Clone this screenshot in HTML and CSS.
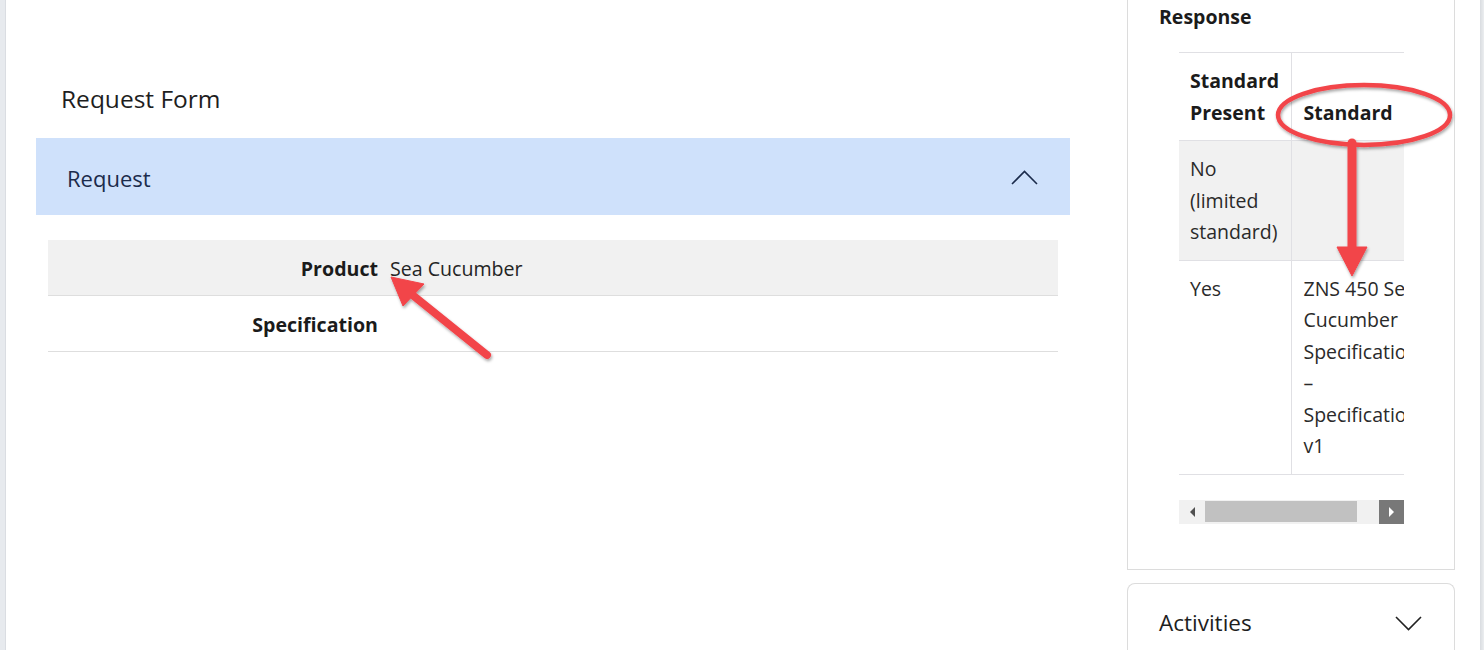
FILE: index.html
```html
<!DOCTYPE html>
<html lang="en">
<head>
<meta charset="utf-8">
<title>Request Form</title>
<link rel="stylesheet" href="styles.css">
</head>
<body>
<div class="app">
  <div class="gutter-left"></div>
  <main class="main">
    <h1 class="form-title">Request Form</h1>
    <section class="section">
      <header class="section-head">
        <span class="section-name">Request</span>
        <svg class="chev" width="27" height="15" viewBox="0 0 27 15"><path d="M1 14 L13.5 1.5 L26 14" fill="none" stroke="#1b2b4b" stroke-width="1.6"/></svg>
      </header>
      <div class="fields">
        <div class="field alt">
          <div class="label">Product</div>
          <div class="value">Sea Cucumber</div>
        </div>
        <div class="field">
          <div class="label">Specification</div>
          <div class="value"></div>
        </div>
      </div>
    </section>
  </main>
  <aside class="side">
    <div class="card response">
      <h2 class="card-title">Response</h2>
      <div class="table-wrap">
        <div class="table-clip">
          <table class="grid">
            <colgroup><col class="w1"><col class="w2"></colgroup>
            <thead>
              <tr><th class="c1">Standard Present</th><th class="c2">Standard</th></tr>
            </thead>
            <tbody>
              <tr class="alt"><td class="c1">No (limited standard)</td><td class="c2"></td></tr>
              <tr><td class="c1">Yes</td><td class="c2">ZNS 450 Sea Cucumber Specification – Specification v1</td></tr>
            </tbody>
          </table>
        </div>
        <div class="hscroll">
          <div class="hs-btn left"><span class="tri-left"></span></div>
          <div class="hs-track"><div class="hs-thumb"></div></div>
          <div class="hs-btn right"><span class="tri-right"></span></div>
        </div>
      </div>
    </div>
    <div class="card activities">
      <span class="act-title">Activities</span>
      <svg class="chev" width="27" height="15" viewBox="0 0 27 15"><path d="M1 1 L13.5 13.5 L26 1" fill="none" stroke="#222" stroke-width="1.6"/></svg>
    </div>
  </aside>
  <div class="gutter-right"></div>
</div>
<svg class="annotations" width="1484" height="650" viewBox="0 0 1484 650">
  <defs>
    <filter id="sh" x="-20%" y="-20%" width="140%" height="140%">
      <feDropShadow dx="1" dy="2" stdDeviation="1.5" flood-color="#000" flood-opacity="0.35"/>
    </filter>
  </defs>
  <g filter="url(#sh)" fill="#f2444a" stroke="#f2444a">
    <line x1="487" y1="355" x2="410" y2="293" stroke-width="8" stroke-linecap="round"/>
    <polygon points="391,277 403,306 424,284" stroke-width="1" stroke-linejoin="round"/>
    <ellipse cx="1364" cy="115" rx="86" ry="30" fill="none" stroke-width="4.5"/>
    <line x1="1352" y1="143" x2="1352" y2="250" stroke-width="9" stroke-linecap="round"/>
    <polygon points="1337,247 1367,247 1352,276" stroke-width="1" stroke-linejoin="round"/>
  </g>
</svg>
</body>
</html>
```
FILE: styles.css
```css
* { box-sizing: border-box; }
html, body { margin: 0; padding: 0; }
body {
  font-family: "Open Sans", "Noto Sans", "Liberation Sans", sans-serif;
  color: #242424;
  background: #fff;
  width: 1484px;
  height: 650px;
  overflow: hidden;
  position: relative;
}
.app {
  display: flex;
  height: 650px;
}
.gutter-left {
  width: 6px;
  flex: none;
  background: #e7eaee;
  border-right: 1px solid #dadde2;
}
.gutter-right {
  width: 4px;
  flex: none;
  background: linear-gradient(to right, #d9dce0, #eceef0);
}
.main {
  width: 1121px;
  flex: none;
  padding: 82px 57px 0 30px;
}
.form-title {
  margin: 0 0 23px 25px;
  font-size: 24.5px;
  font-weight: 400;
  line-height: 33px;
  color: #1e1e1e;
}
.section-head {
  height: 77px;
  background: #cfe1fb;
  display: flex;
  align-items: center;
  justify-content: space-between;
  padding: 2px 32px 0 31px;
}
.section-name {
  font-size: 22px;
  color: #1b2b4b;
}
.fields {
  margin: 25px 12px 0;
}
.field {
  display: flex;
  align-items: center;
  height: 56px;
  padding-top: 2px;
  border-bottom: 1px solid #dedede;
  font-size: 19.6px;
}
.field.alt { background: #f1f1f1; }
.label {
  width: 330px;
  text-align: right;
  font-weight: 700;
  color: #1b1b1b;
}
.value {
  padding-left: 12px;
  color: #242424;
}
.side {
  width: 328px;
  flex: none;
  margin-right: 25px;
  display: flex;
  flex-direction: column;
  gap: 13px;
}
.card {
  border: 1px solid #dcdcdc;
  background: #fff;
}
.response {
  border-top: none;
  padding: 4px 0 45px 31px;
}
.card-title {
  margin: 0;
  font-size: 19.5px;
  font-weight: 700;
  line-height: 26px;
  color: #1b1b1b;
}
.table-wrap {
  margin: 22px 50px 0 20px;
}
.table-clip {
  overflow: hidden;
  width: 225px;
}
.grid {
  border-collapse: collapse;
  table-layout: fixed;
  width: 277px;
  font-size: 19.5px;
  line-height: 31.5px;
  border-top: 1px solid #e0e0e4;
}
.grid .w1 { width: 112px; }
.grid .w2 { width: 165px; }
.grid th, .grid td {
  text-align: left;
  vertical-align: top;
  padding: 12px 10px 12px 11px;
  border-bottom: 1px solid #e0e0e4;
}
.grid th { font-weight: 700; color: #1b1b1b; vertical-align: bottom; }
.grid td { font-weight: 400; color: #2a2a2a; }
.grid .c1 { border-right: 1px solid #e0e0e4; }
.grid .c2 { padding-left: 12px; padding-right: 35px; }
.grid tr.alt td { background: #f1f1f1; }
.hscroll {
  margin-top: 25px;
  height: 24px;
  width: 225px;
  display: flex;
  background: #f1f1f1;
}
.hs-btn {
  width: 26px;
  flex: none;
  display: flex;
  align-items: center;
  justify-content: center;
}
.hs-btn.right { background: #787878; width: 25px; }
.tri-left {
  width: 0; height: 0;
  border-top: 5px solid transparent;
  border-bottom: 5px solid transparent;
  border-right: 5px solid #505050;
}
.tri-right {
  width: 0; height: 0;
  border-top: 5px solid transparent;
  border-bottom: 5px solid transparent;
  border-left: 5px solid #fff;
}
.hs-track {
  flex: 1;
  display: flex;
  align-items: center;
}
.hs-thumb {
  width: 152px;
  height: 21px;
  background: #c1c1c1;
}
.activities {
  border-radius: 8px 8px 0 0;
  border-bottom: none;
  height: 80px;
  display: flex;
  align-items: flex-start;
  justify-content: space-between;
  padding: 23px 32px 0 31px;
}
.act-title {
  font-size: 22.5px;
  line-height: 31px;
  color: #1e1e1e;
}
.activities .chev { margin-top: 9px; }
.annotations {
  position: absolute;
  left: 0;
  top: 0;
  pointer-events: none;
}
```
